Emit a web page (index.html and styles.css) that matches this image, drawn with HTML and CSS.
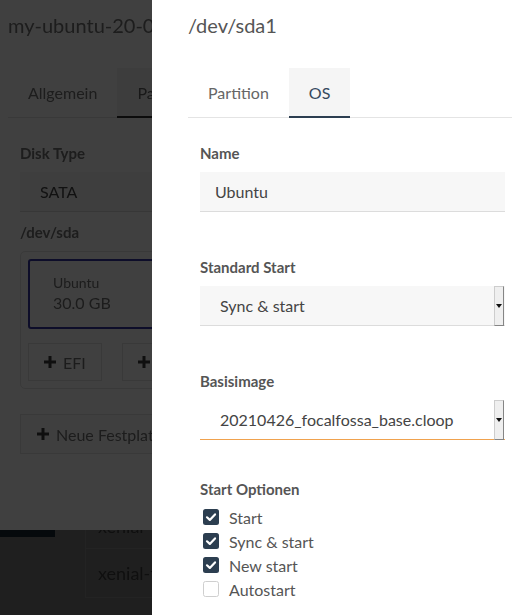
FILE: index.html
```html
<!DOCTYPE html>
<html lang="de">
<head>
<meta charset="utf-8">
<title>/dev/sda1</title>
<link rel="stylesheet" href="styles.css">
</head>
<body>
<div class="screen">
  <div class="backdrop">
    <div class="app">
      <section class="panel panel-bg">
        <h1 class="title">my-ubuntu-20-04-focal</h1>
        <nav class="tabs">
          <span class="tab">Allgemein</span>
          <span class="tab active">Partitionen</span>
        </nav>
        <div class="form">
          <div class="label">Disk Type</div>
          <div class="select field-tight"><span>SATA</span></div>
          <div class="label">/dev/sda</div>
          <div class="disk">
            <div class="parts">
              <div class="part">
                <span class="part-name">Ubuntu</span>
                <span class="part-size">30.0 GB</span>
              </div>
            </div>
            <div class="actions">
              <button class="btn"><svg class="plus" viewBox="0 0 12 12"><path d="M6 0v12M0 6h12"/></svg>EFI</button>
              <button class="btn"><svg class="plus" viewBox="0 0 12 12"><path d="M6 0v12M0 6h12"/></svg>Partition</button>
            </div>
          </div>
          <button class="btn btn-wide"><svg class="plus" viewBox="0 0 12 12"><path d="M6 0v12M0 6h12"/></svg>Neue Festplatte</button>
        </div>
      </section>
      <div class="lower">
        <div class="side"><div class="strip"></div></div>
        <div class="list">
          <div class="row row-cut"><span>xenial-fossa</span></div>
          <div class="row"><span>xenial-fossa</span></div>
        </div>
      </div>
    </div>
  </div>

  <aside class="panel drawer">
    <h1 class="title">/dev/sda1</h1>
    <nav class="tabs">
      <span class="tab">Partition</span>
      <span class="tab active">OS</span>
    </nav>
    <div class="form">
      <div class="label">Name</div>
      <div class="input field">Ubuntu</div>

      <div class="label">Standard Start</div>
      <div class="select field"><span>Sync &amp; start</span><span class="arrow"></span></div>

      <div class="label">Basisimage</div>
      <div class="select focus field-last"><span>20210426_focalfossa_base.cloop</span><span class="arrow"></span></div>

      <div class="label">Start Optionen</div>
      <div class="checks">
        <label class="check"><svg class="box" viewBox="0 0 16 16"><rect width="16" height="16" rx="2.5" fill="#2c3e50"/><path d="M4 8.3l2.8 2.6L12 5.4" fill="none" stroke="#fff" stroke-width="2.2" stroke-linecap="round" stroke-linejoin="round"/></svg>Start</label>
        <label class="check"><svg class="box" viewBox="0 0 16 16"><rect width="16" height="16" rx="2.5" fill="#2c3e50"/><path d="M4 8.3l2.8 2.6L12 5.4" fill="none" stroke="#fff" stroke-width="2.2" stroke-linecap="round" stroke-linejoin="round"/></svg>Sync &amp; start</label>
        <label class="check"><svg class="box" viewBox="0 0 16 16"><rect width="16" height="16" rx="2.5" fill="#2c3e50"/><path d="M4 8.3l2.8 2.6L12 5.4" fill="none" stroke="#fff" stroke-width="2.2" stroke-linecap="round" stroke-linejoin="round"/></svg>New start</label>
        <label class="check"><svg class="box" viewBox="0 0 16 16"><rect x="0.5" y="0.5" width="15" height="15" rx="2" fill="#fff" stroke="#cfcfcf"/></svg>Autostart</label>
      </div>
    </div>
  </aside>
</div>
</body>
</html>
```
FILE: styles.css
```css
* { box-sizing: border-box; }
html, body { margin: 0; height: 100%; }
body {
  font-family: Lato, "Open Sans", sans-serif;
  background: #1f1f1f;
  overflow: hidden;
}
.screen { display: flex; width: 512px; height: 615px; }

/* dimmed application behind the drawer */
.backdrop {
  width: 152px;
  flex: none;
  overflow: hidden;
  filter: brightness(0.25);
}
.app { width: 560px; height: 615px; background: #7c7c7c; }
.panel-bg { height: 530px; padding: 13px 0 0 8px; }
.panel-bg .title,
.panel-bg .tab,
.panel-bg .label { color: #727272; }
.panel-bg .tab.active { color: #606060; border-bottom-color: #303030; }

.disk {
  border: 1px solid #e4e4e4;
  border-radius: 5px;
  padding: 7px;
}
.parts { display: flex; gap: 8px; }
.part {
  width: 300px;
  border: 2px solid #3434a4;
  border-radius: 3px;
  padding: 13px 23px;
  display: flex;
  flex-direction: column;
  color: #707070;
}
.part-name { font-size: 14px; line-height: 18px; }
.part-size { font-size: 16px; line-height: 22px; }
.actions { display: flex; gap: 20px; margin-top: 14px; }
.btn {
  height: 38px;
  padding: 0 15px;
  border: 1px solid #e3e3e3;
  background: #fff;
  display: flex;
  align-items: center;
  gap: 7px;
  font-family: inherit;
  font-size: 16px;
  color: #707070;
}
.btn-wide {
  margin-top: 25px;
  height: 40px;
  width: 300px;
  padding: 0 16px;
  background: #fcfcfc;
}
.plus { width: 12px; height: 12px; flex: none; }
.plus path { stroke: #3a3a3a; stroke-width: 3; }

.lower { display: flex; height: 85px; }
.side { width: 55px; flex: none; }
.strip { height: 7px; background: #142430; }
.list { margin-left: 30px; width: 400px; }
.row {
  height: 49px;
  border: 1px solid #8c8c8c;
  border-top: 0;
  display: flex;
  align-items: center;
  padding-left: 12px;
  font-size: 18px;
  line-height: 22px;
  color: #3c3c3c;
}
.row-cut { height: 19px; overflow: hidden; align-items: flex-start; }
.row-cut span { margin-top: -15px; }

/* shared panel parts */
.panel { background: #fff; color: #555; }
.drawer {
  width: 360px;
  flex: none;
  height: 615px;
  padding: 13px 0 0 36px;
}
.title {
  margin: 0;
  font-size: 20px;
  line-height: 24px;
  font-weight: 400;
  color: #555;
  white-space: nowrap;
}
.tabs {
  display: flex;
  margin-top: 31px;
  height: 50px;
  border-bottom: 1px solid #e4e4e4;
}
.tab {
  height: 50px;
  padding: 0 20px;
  display: flex;
  align-items: center;
  font-size: 16px;
  color: #666;
  border-bottom: 2px solid transparent;
  white-space: nowrap;
}
.tab.active {
  background: #f5f5f5;
  border-bottom-color: #2c3e50;
  color: #34495e;
}
.form { padding: 25px 7px 0 12px; }
.label {
  font-size: 15px;
  line-height: 20px;
  font-weight: 700;
  color: #555;
  margin-bottom: 9px;
  white-space: nowrap;
}
.input, .select {
  height: 40px;
  background: #f7f7f7;
  border-bottom: 1px solid #dcdcdc;
  display: flex;
  align-items: center;
  font-size: 16px;
  color: #444;
  white-space: nowrap;
}
.input { padding-left: 15px; }
.select { padding-left: 20px; }
.select.focus { background: #fff; border-bottom-color: #f0a24e; }
.field { margin-bottom: 45px; }
.field-tight { margin-bottom: 10px; }
.field-last { margin-bottom: 39px; }
.arrow {
  margin-left: auto;
  margin-right: 1px;
  width: 10px;
  height: 40px;
  flex: none;
  background: #efefef;
  border: 1px solid #cdcdcd;
  border-right-color: #858585;
  border-bottom-color: #858585;
  display: flex;
  align-items: center;
  justify-content: center;
}
.arrow::after {
  content: "";
  border-left: 3px solid transparent;
  border-right: 3px solid transparent;
  border-top: 4px solid #111;
}
.checks { margin-top: -3px; }
.check {
  display: flex;
  align-items: center;
  height: 24px;
  font-size: 16px;
  color: #555;
}
.box { width: 16px; height: 16px; margin: 0 10px 0 3px; flex: none; }
```
